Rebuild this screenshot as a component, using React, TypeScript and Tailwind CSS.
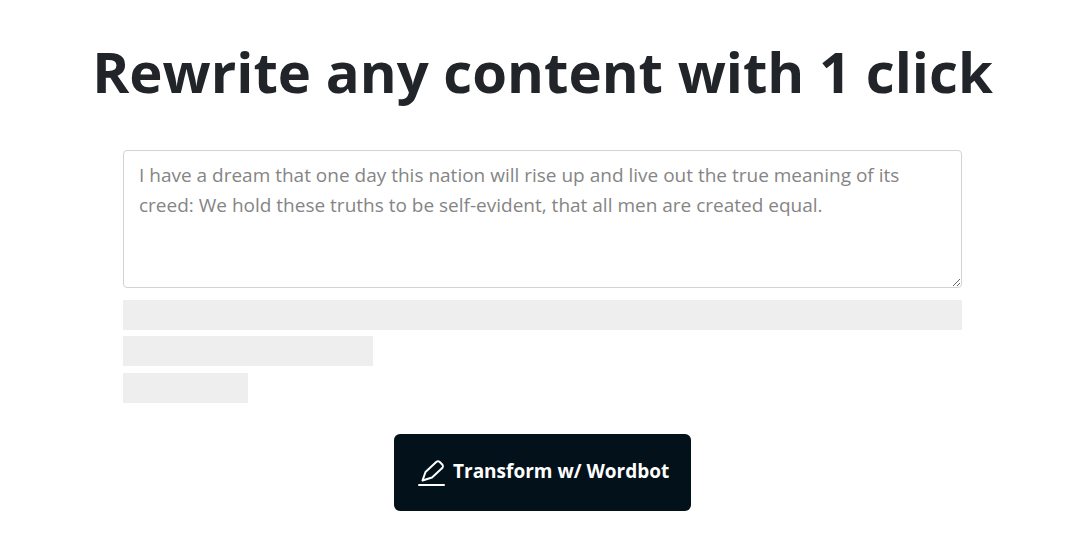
import React from 'react';

const placeholder =
  'I have a dream that one day this nation will rise up and live out the true meaning of its creed: We hold these truths to be self-evident, that all men are created equal.';

export default function App() {
  return (
    <div className="min-h-[534px] pr-[4px] bg-white flex flex-col items-center font-['Open_Sans','Noto_Sans',sans-serif] text-[#212529]">
      <h1 className="mt-[32px] h-[78px] text-[56.25px] leading-[78px] font-bold whitespace-nowrap text-center">
        Rewrite any content with 1 click
      </h1>
      <div className="mt-[40px] w-[839px] flex flex-col">
        <textarea
          placeholder={placeholder}
          className="w-full h-[138px] block rounded border border-[#ced4da] px-[15px] py-[9px] text-[19px] leading-[30px] bg-white outline-none placeholder:text-[#858585] placeholder:opacity-100"
        />
        <div className="mt-[12px] flex flex-col gap-[6px]">
          <div className="h-[30px] w-full bg-[#eeeeee]" />
          <div className="h-[30px] w-[250px] bg-[#eeeeee]" />
          <div className="h-[30px] w-[125px] mt-[1px] bg-[#eeeeee]" />
        </div>
      </div>
      <button
        type="button"
        className="mt-[31px] w-[297px] h-[77px] pl-[24px] rounded-md bg-[#03111a] text-white flex items-center gap-[7px] text-[19px] font-bold"
      >
        <svg className="-mt-[2px]" width="28" height="30" viewBox="0 0 28 30" fill="none" stroke="currentColor" strokeWidth="2" strokeLinejoin="round" strokeLinecap="round">
          <path d="M4.5 23.5 L7.5 15 L18.5 4.8 C19.5 4 20.5 4 21.5 4.8 L24.5 7.8 C25.3 8.8 25.3 9.8 24.5 10.8 L14 20.5 Z" />
          <path d="M1 28 L26 28" />
        </svg>
        <span className="-mt-[2px]">Transform w/ Wordbot</span>
      </button>
    </div>
  );
}
